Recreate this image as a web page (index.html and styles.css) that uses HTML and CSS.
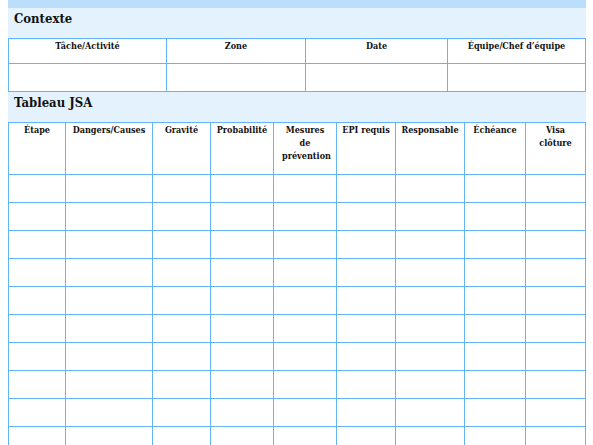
FILE: index.html
```html
<!DOCTYPE html>
<html lang="fr">
<head>
<meta charset="utf-8">
<link rel="stylesheet" href="styles.css">
</head>
<body>
<div class="strip"></div>
<div class="band"><h2 class="band-title">Contexte</h2></div>
<table class="grid ctx">
  <colgroup><col style="width:158px"><col style="width:139px"><col style="width:142px"><col></colgroup>
  <tr class="head"><th>Tâche/Activité</th><th>Zone</th><th>Date</th><th>Équipe/Chef d’équipe</th></tr>
  <tr class="row"><td></td><td></td><td></td><td></td></tr>
</table>
<div class="band"><h2 class="band-title">Tableau JSA</h2></div>
<table class="grid jsa">
  <colgroup><col style="width:57px"><col style="width:87px"><col style="width:58px"><col style="width:63px"><col style="width:63px"><col style="width:59px"><col style="width:69px"><col style="width:61px"><col></colgroup>
  <tr class="head"><th>Étape</th><th>Dangers/Causes</th><th>Gravité</th><th>Probabilité</th><th class="tight">Mesures de prévention</th><th>EPI requis</th><th>Responsable</th><th>Échéance</th><th>Visa clôture</th></tr>
  <tr class="row"><td></td><td></td><td></td><td></td><td></td><td></td><td></td><td></td><td></td></tr>
  <tr class="row"><td></td><td></td><td></td><td></td><td></td><td></td><td></td><td></td><td></td></tr>
  <tr class="row"><td></td><td></td><td></td><td></td><td></td><td></td><td></td><td></td><td></td></tr>
  <tr class="row"><td></td><td></td><td></td><td></td><td></td><td></td><td></td><td></td><td></td></tr>
  <tr class="row"><td></td><td></td><td></td><td></td><td></td><td></td><td></td><td></td><td></td></tr>
  <tr class="row"><td></td><td></td><td></td><td></td><td></td><td></td><td></td><td></td><td></td></tr>
  <tr class="row"><td></td><td></td><td></td><td></td><td></td><td></td><td></td><td></td><td></td></tr>
  <tr class="row"><td></td><td></td><td></td><td></td><td></td><td></td><td></td><td></td><td></td></tr>
  <tr class="row"><td></td><td></td><td></td><td></td><td></td><td></td><td></td><td></td><td></td></tr>
  <tr class="row"><td></td><td></td><td></td><td></td><td></td><td></td><td></td><td></td><td></td></tr>
</table>
</body>
</html>
```
FILE: styles.css
```css
html, body { background: #ffffff; }
body {
  margin: 0;
  padding: 0 7px 0 8px;
  font-family: "DejaVu Serif Condensed", "DejaVu Serif", serif;
  color: #111;
}
.strip { height: 8px; background: #bbdefb; }
.band {
  background: #e3f2fd;
  height: 30px;
  box-sizing: border-box;
  padding: 2px 6px 0;
}
.band-title {
  margin: 0;
  font-size: 13px;
  font-weight: bold;
  line-height: 18px;
}
.grid {
  width: 100%;
  border-collapse: collapse;
  table-layout: fixed;
}
.grid th, .grid td {
  border: 1px solid #64b5f6;
  padding: 0;
}
.grid th {
  font-size: 9px;
  font-weight: bold;
  line-height: 13px;
  vertical-align: top;
  text-align: center;
  padding: 1px 3px 0;
}
.grid th.tight { padding-left: 8px; padding-right: 8px; }
.ctx .head th { height: 23px; }
.ctx .row td { height: 27px; }
.jsa .head th { height: 50px; }
.jsa .row td { height: 27px; }
```
